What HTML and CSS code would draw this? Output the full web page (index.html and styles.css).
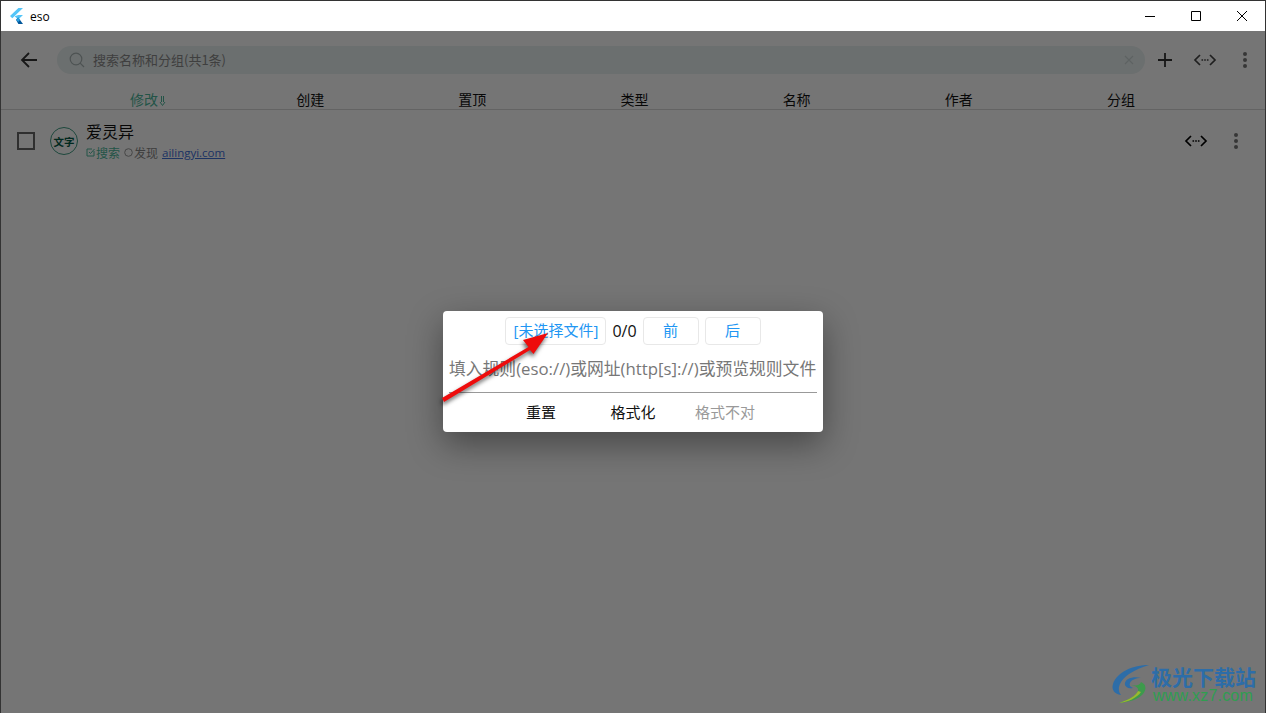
FILE: index.html
```html
<!DOCTYPE html>
<html lang="zh-CN">
<head>
  <meta charset="UTF-8" />
  <title>eso</title>
  <link rel="stylesheet" href="styles.css">
</head>
<body>
<div class="window">
  <div class="titlebar">
    <svg class="app-logo" width="14" height="16" viewBox="0 0 14 16">
      <path fill="#54c5f8" d="M0 8 8.400 0H13L2.300 10.200z"/>
      <path fill="#54c5f8" d="M4.600 8.200 8.400 7H13L8.200 11.600z"/>
      <path fill="#01579b" d="M6 11.800 8.200 9.600 13 16H8.400z"/>
      <path fill="#29a0e0" d="M6 11.800 8.200 9.600l2 2.200-2 2.200z"/>
    </svg>
    <span class="app-name">eso</span>
    <div class="caption">
      <button class="cap-btn"><svg width="12" height="12" viewBox="0 0 12 12"><path d="M1 6.500h10" stroke="#000" fill="none"/></svg></button>
      <button class="cap-btn"><svg width="12" height="12" viewBox="0 0 12 12"><path d="M1.500 1.500h9v9h-9z" stroke="#000" fill="none"/></svg></button>
      <button class="cap-btn"><svg width="12" height="12" viewBox="0 0 12 12"><path d="M1 1l10 10M11 1 1 11" stroke="#000" fill="none"/></svg></button>
    </div>
  </div>

  <div class="app">
    <div class="toolbar">
      <button class="icon-btn">
        <svg width="20" height="20" viewBox="0 0 20 20"><path d="M18 10H3M10 3l-7 7 7 7" stroke="#333" stroke-width="1.800" fill="none"/></svg>
      </button>
      <div class="search">
        <svg width="16" height="16" viewBox="0 0 16 16"><circle cx="7" cy="7" r="5.800" stroke="#a8b4b4" stroke-width="1.200" fill="none"/><path d="M11.200 11.200 15 15" stroke="#a8b4b4" stroke-width="1.200"/></svg>
        <span class="search-text">搜索名称和分组(共1条)</span>
        <svg width="10" height="10" viewBox="0 0 10 10"><path d="M1 1l8 8M9 1 1 9" stroke="#ccd6d6" stroke-width="1.200"/></svg>
      </div>
      <button class="icon-btn">
        <svg width="16" height="16" viewBox="0 0 16 16"><path d="M8 1v14M1 8h14" stroke="#333" stroke-width="1.800"/></svg>
      </button>
      <button class="icon-btn">
        <svg width="24" height="14" viewBox="0 0 24 14"><path d="M7 2 2 7l5 5M17 2l5 5-5 5" stroke="#444" stroke-width="1.700" fill="none"/><path d="M8.500 7h1.600M11.200 7h1.600M13.900 7h1.600" stroke="#444" stroke-width="1.700"/></svg>
      </button>
      <button class="icon-btn">
        <svg width="4" height="16" viewBox="0 0 4 16"><circle cx="2" cy="2" r="2" fill="#777"/><circle cx="2" cy="8" r="2" fill="#777"/><circle cx="2" cy="14" r="2" fill="#777"/></svg>
      </button>
    </div>

    <div class="sort-row">
      <span class="active">修改<svg class="sort-mark" width="7" height="10" viewBox="0 0 7 10"><path d="M2.500 0v6M4.500 0v6M1 6l2.500 3.500L6 6" stroke="#4db89c" fill="none"/></svg></span>
      <span>创建</span>
      <span>置顶</span>
      <span>类型</span>
      <span>名称</span>
      <span>作者</span>
      <span>分组</span>
    </div>

    <div class="rule-row">
      <span class="checkbox"></span>
      <span class="avatar">文字</span>
      <div class="rule-info">
        <div class="rule-title">爱灵异</div>
        <div class="rule-sub">
          <span class="on"><svg width="9" height="9" viewBox="0 0 9 9"><path d="M8 3v5H1V1h5" stroke="#4db89c" fill="none"/><path d="M3 4l1.500 1.500L8.500 1" stroke="#4db89c" fill="none"/></svg>搜索</span>
          <span class="off"><svg width="9" height="9" viewBox="0 0 9 9"><circle cx="4.500" cy="4.500" r="3.800" stroke="#999" fill="none"/></svg>发现</span>
          <a href="#" class="host">ailingyi.com</a>
        </div>
      </div>
      <button class="icon-btn">
        <svg width="24" height="14" viewBox="0 0 24 14"><path d="M7 2 2 7l5 5M17 2l5 5-5 5" stroke="#000" stroke-width="1.700" fill="none"/><path d="M8.500 7h1.600M11.200 7h1.600M13.900 7h1.600" stroke="#000" stroke-width="1.700"/></svg>
      </button>
      <button class="icon-btn">
        <svg width="4" height="16" viewBox="0 0 4 16"><circle cx="2" cy="2" r="2" fill="#777"/><circle cx="2" cy="8" r="2" fill="#777"/><circle cx="2" cy="14" r="2" fill="#777"/></svg>
      </button>
    </div>

    <div class="scrim">
      <div class="dialog">
        <div class="dialog-top">
          <button class="file-btn wide">[未选择文件]</button>
          <span class="count">0/0</span>
          <button class="file-btn">前</button>
          <button class="file-btn">后</button>
        </div>
        <div class="rule-input">填入规则(eso://)或网址(http[s]://)或预览规则文件</div>
        <div class="dialog-actions">
          <span>重置</span>
          <span>格式化</span>
          <span class="muted">格式不对</span>
        </div>
      </div>
    </div>
  </div>
</div>

<svg class="arrow" width="120" height="80" viewBox="0 0 120 80">
  <path fill="#ee0c0c" d="M0 67 86.500 16 81 9 106 2 91.500 23 88 19 2 71z"/>
</svg>

<div class="watermark">
  <svg width="40" height="40" viewBox="0 0 40 40">
    <path fill="#2d6da8" d="M38 1C22 1 6 8 2 20c-2 6 2 10 8 11C5 25 9 16 18 10 24 6 31 3 38 1z"/>
    <path fill="#2d6da8" d="M30 14c-7-2-15 0-16 5-1 4 4 6 8 5-3-1-4-3-3-5 1-3 6-5 11-5z"/>
    <path fill="#3d9a4c" d="M20 21c6 1 9 0 10-3 5 2 6 7 2 12-5 6-15 8-24 9 9-3 17-7 19-12 1-3-2-5-7-6z"/>
    <path fill="#9ab82f" d="M8 39c9-3 17-7 19-12l3 1c-4 6-13 10-22 11z"/>
  </svg>
  <div class="wm-text">
    <span class="wm-name">极光下载站</span>
    <span class="wm-url">www.xz7.com</span>
  </div>
</div>
</body>
</html>
```

FILE: styles.css
```css
* {
  margin: 0;
  padding: 0;
  box-sizing: border-box;
}

html, body {
  height: 100%;
  overflow: hidden;
  font-family: "Noto Sans CJK SC", "Noto Sans", sans-serif;
}

button {
  font-family: inherit;
  background: none;
  border: none;
}

.window {
  height: 100%;
  display: flex;
  flex-direction: column;
  border: 1px solid #333;
  border-bottom: none;
  background: #fff;
}

.titlebar {
  height: 30px;
  display: flex;
  align-items: center;
  flex-shrink: 0;
  padding-left: 9px;
  background: #fff;
}

.app-logo {
  margin-right: 6px;
}

.app-name {
  font-family: "Open Sans", sans-serif;
  font-size: 12px;
  color: #000;
}

.caption {
  margin-left: auto;
  display: flex;
}

.cap-btn {
  width: 46px;
  height: 30px;
  display: flex;
  align-items: center;
  justify-content: center;
}

.app {
  flex: 1;
  position: relative;
  display: flex;
  flex-direction: column;
  background: #fff;
}

.toolbar {
  height: 57px;
  display: flex;
  align-items: center;
  padding-left: 8px;
}

.icon-btn {
  width: 40px;
  height: 40px;
  flex-shrink: 0;
  display: flex;
  align-items: center;
  justify-content: center;
}

.search {
  flex: 1;
  height: 28px;
  margin-left: 8px;
  padding: 0 11px 0 12px;
  display: flex;
  align-items: center;
  gap: 8px;
  border-radius: 14px;
  background: #e9f1f1;
}

.search-text {
  flex: 1;
  font-size: 13px;
  color: #8a8a8a;
}

.sort-row {
  height: 22px;
  padding: 2px 63px 0 66px;
  display: grid;
  grid-template-columns: repeat(7, 1fr);
  grid-template-rows: 19px;
  align-items: center;
  text-align: center;
  font-size: 14px;
  line-height: 19px;
  color: #111;
  border-bottom: 1px solid #d8d8d8;
}

.sort-row .active {
  color: #4db89c;
}

.sort-mark {
  margin-left: 1px;
  vertical-align: -1px;
}

.rule-row {
  height: 62px;
  display: flex;
  align-items: center;
  padding: 0 9px 0 16px;
}

.checkbox {
  width: 18px;
  height: 18px;
  border: 2px solid #666;
  margin-right: 15px;
  flex-shrink: 0;
}

.avatar {
  width: 28px;
  height: 28px;
  margin-right: 8px;
  flex-shrink: 0;
  display: flex;
  align-items: center;
  justify-content: center;
  border: 1px solid #3f9c84;
  border-radius: 50%;
  font-size: 10.500px;
  font-weight: 700;
  color: #045a44;
}

.rule-info {
  flex: 1;
  display: flex;
  flex-direction: column;
}

.rule-title {
  font-size: 16px;
  line-height: 22px;
  color: #111;
}

.rule-sub {
  display: flex;
  align-items: center;
  gap: 4px;
  margin-top: 1px;
  font-size: 12px;
  line-height: 20px;
}

.rule-sub span {
  display: flex;
  align-items: center;
  gap: 1px;
}

.on {
  color: #4db89c;
}

.off {
  color: #888;
}

.host {
  color: #3f6fd8;
  font-family: "Open Sans", sans-serif;
  font-size: 11.500px;
}

.scrim {
  position: absolute;
  inset: 0;
  padding-bottom: 2px;
  display: flex;
  align-items: center;
  justify-content: center;
  background: rgba(0, 0, 0, 0.54);
}

.dialog {
  width: 380px;
  height: 121px;
  padding: 6px 6px 0;
  display: flex;
  flex-direction: column;
  background: #fff;
  border-radius: 4px;
  box-shadow: 0 12px 34px rgba(0, 0, 0, 0.4);
}

.dialog-top {
  display: flex;
  align-items: center;
  justify-content: center;
  gap: 6px;
}

.file-btn {
  width: 56px;
  height: 28px;
  padding-bottom: 2px;
  border: 1px solid #e8e8e8;
  border-radius: 4px;
  font-family: "Open Sans", "Noto Sans CJK SC", sans-serif;
  font-size: 15px;
  color: #2196f3;
}

.file-btn.wide {
  width: 101px;
}

.count {
  font-family: "Open Sans", sans-serif;
  font-size: 16px;
  color: #111;
}

.rule-input {
  height: 48px;
  line-height: 47px;
  font-family: "Open Sans", "Noto Sans CJK SC", sans-serif;
  font-size: 16.800px;
  color: #777;
  white-space: nowrap;
  border-bottom: 1px solid #999;
}

.dialog-actions {
  flex: 1;
  padding-bottom: 2px;
  display: grid;
  grid-template-columns: repeat(3, 92px);
  justify-content: center;
  align-items: center;
  text-align: center;
  font-size: 15px;
  color: #111;
}

.dialog-actions .muted {
  color: #999;
}

/* annotation arrow drawn over the screenshot */
.arrow {
  position: absolute;
  left: 442px;
  top: 331px;
  overflow: visible;
  filter: drop-shadow(-1px 3px 2px rgba(0, 0, 0, 0.6));
}

.watermark {
  position: absolute;
  left: 1111px;
  top: 664px;
  display: flex;
}

.wm-text {
  display: flex;
  flex-direction: column;
}

.wm-name {
  font-size: 21px;
  line-height: 24px;
  font-weight: 700;
  color: #2d6da8;
}

.wm-url {
  font-family: "Liberation Sans", sans-serif;
  font-size: 16px;
  line-height: 16px;
  letter-spacing: 0.2px;
  color: #2f9e50;
  margin-left: 2px;
}
```
